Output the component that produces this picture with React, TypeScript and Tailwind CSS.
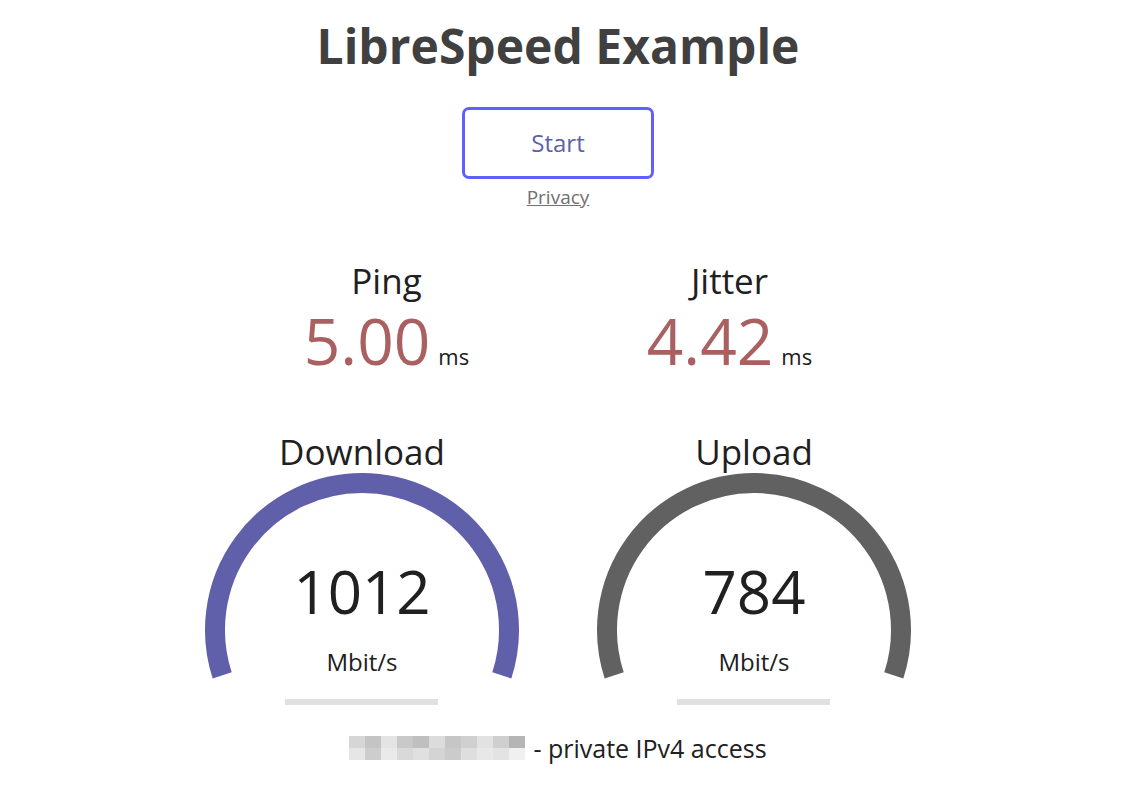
import React from 'react';

const font = { fontFamily: '"Open Sans", "Noto Sans", sans-serif' };

// mosaic cells standing in for the blurred address
const mosaic = [
  ['#d6d6d6', '#c4c4c4', '#e4e4e4', '#c9c9c9', '#bfbfbf', '#dcdcdc', '#c6c6c6', '#d0d0d0', '#e2e2e2', '#cfcfcf', '#b5b5b5'],
  ['#e6e6e6', '#cdcdcd', '#eaeaea', '#d9d9d9', '#e0e0e0', '#d4d4d4', '#cbcbcb', '#dedede', '#e8e8e8', '#e3e3e3', '#f0f0f0'],
];

function Gauge({ label, value, color }: { label: string; value: string; color: string }) {
  const cx = 196;
  const cy = 158;
  const r = 147;
  const a0 = -Math.PI * 1.1;
  const a1 = Math.PI * 0.1;
  const d = `M ${cx + r * Math.cos(a0)} ${cy + r * Math.sin(a0)} A ${r} ${r} 0 1 1 ${cx + r * Math.cos(a1)} ${cy + r * Math.sin(a1)}`;
  return (
    <div className="w-[392px] flex flex-col items-center">
      <div className="text-[35px] leading-[40px]">{label}</div>
      <div className="relative w-[392px] h-[240px]">
        <svg width="392" height="240" viewBox="0 0 392 240">
          <path d={d} fill="none" stroke={color} strokeWidth="20" />
          <rect x="119" y="227" width="153" height="6" fill="#e0e0e0" />
        </svg>
        <div className="absolute left-0 right-0 top-[81px] text-center text-[60px] leading-[76px] text-[#202020]">
          {value}
        </div>
        <div className="absolute left-0 right-0 top-[175px] text-center text-[24px] leading-[30px] text-[#202020]">
          Mbit/s
        </div>
      </div>
    </div>
  );
}

function Small({ label, value }: { label: string; value: string }) {
  return (
    <div className="w-[343px] flex flex-col items-center">
      <div className="text-[35px] leading-[40px]">{label}</div>
      <div className="flex items-baseline mt-[4px]">
        <span className="text-[64px] leading-[72px] text-[#AA6060]">{value}</span>
        <span className="text-[22px] ml-[8px] text-[#202020]">ms</span>
      </div>
    </div>
  );
}

export default function App() {
  return (
    <div className="w-[1116px] min-h-[806px] bg-white flex flex-col items-center text-[#202020]" style={font}>
      <h1 className="mt-[14px] text-[48px] leading-[64px] font-bold text-[#404040]">LibreSpeed Example</h1>
      <button className="mt-[29px] w-[192px] h-[72px] border-[3.5px] border-[#6060FF] rounded-[7px] text-[24px] text-[#6060AA]">
        Start
      </button>
      <a className="mt-[6px] text-[19px] leading-[24px] text-[#707070] underline">Privacy</a>
      <div className="flex mt-[52px]">
        <Small label="Ping" value="5.00" />
        <Small label="Jitter" value="4.42" />
      </div>
      <div className="flex mt-[55px]">
        <Gauge label="Download" value="1012" color="#6060AA" />
        <Gauge label="Upload" value="784" color="#616161" />
      </div>
      <div className="mt-[20px] flex items-center text-[25px] leading-[32px]">
        <div className="flex flex-col">
          {mosaic.map((row, i) => (
            <div key={i} className="flex">
              {row.map((c, j) => (
                <div key={j} className="w-[16px] h-[12px]" style={{ backgroundColor: c }} />
              ))}
            </div>
          ))}
        </div>
        <span className="ml-[8px]">- private IPv4 access</span>
      </div>
    </div>
  );
}
